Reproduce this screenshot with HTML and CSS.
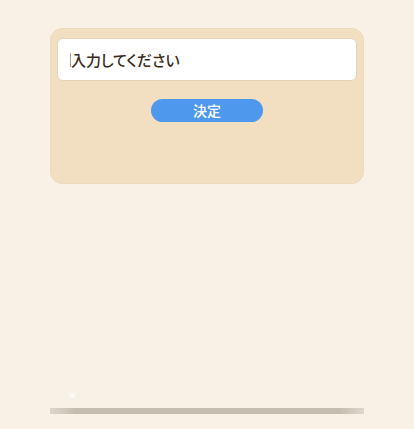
FILE: index.html
```html
<!DOCTYPE html>
<html lang="ja">

<head>
  <meta charset="UTF-8" />
  <meta name="viewport" content="width=device-width, initial-scale=1.0" />
  <title>入力</title>
  <link rel="stylesheet" href="styles.css">
</head>

<body>
  <div class="page">
    <div class="panel">
      <div class="field">
        <span class="caret"></span>
        <span class="field-text">入力してください</span>
      </div>
      <button class="submit">決定</button>
    </div>
    <div class="footer">
      <span class="close">✕</span>
      <div class="shadow-bar"></div>
    </div>
  </div>
</body>

</html>
```

FILE: styles.css
```css
* {
  box-sizing: border-box;
}

body {
  margin: 0;
  background: #faf1e6;
  font-family: "Noto Sans CJK JP", "Noto Sans", sans-serif;
}

.page {
  min-height: 429px;
  display: flex;
  flex-direction: column;
  align-items: center;
  padding: 28px 0 15px;
}

.panel {
  width: 314px;
  height: 156px;
  background: #f2dfc2;
  border: 1px solid #ecdcbf;
  border-radius: 12px;
  padding: 9px 6px 0 6px;
  display: flex;
  flex-direction: column;
  align-items: center;
}

.field {
  width: 100%;
  height: 43px;
  background: #fff;
  border: 1px solid #e4d3b8;
  border-radius: 6px;
  display: flex;
  align-items: center;
  padding-left: 12px;
}

.caret {
  width: 1px;
  height: 14px;
  background: #a0a0a0;
}

.field-text {
  font-size: 15px;
  font-feature-settings: "palt";
  color: #3a2a1c;
  font-weight: 500;
}

.submit {
  margin-top: 18px;
  width: 112px;
  height: 23px;
  appearance: none;
  border: none;
  border-radius: 12px;
  background: #4e99ee;
  color: #fff;
  font-family: inherit;
  font-size: 14px;
  font-weight: 500;
  line-height: 23px;
  padding: 0;
}

.footer {
  margin-top: auto;
  width: 314px;
  display: flex;
  flex-direction: column;
}

.close {
  margin-left: 18px;
  font-size: 10px;
  line-height: 10px;
  color: #fff;
  margin-bottom: 8px;
}

.shadow-bar {
  height: 6px;
  background: linear-gradient(to right, #ddd6ca, #c4beb1 8%, #c4beb1 92%, #ddd6ca);
}
```
